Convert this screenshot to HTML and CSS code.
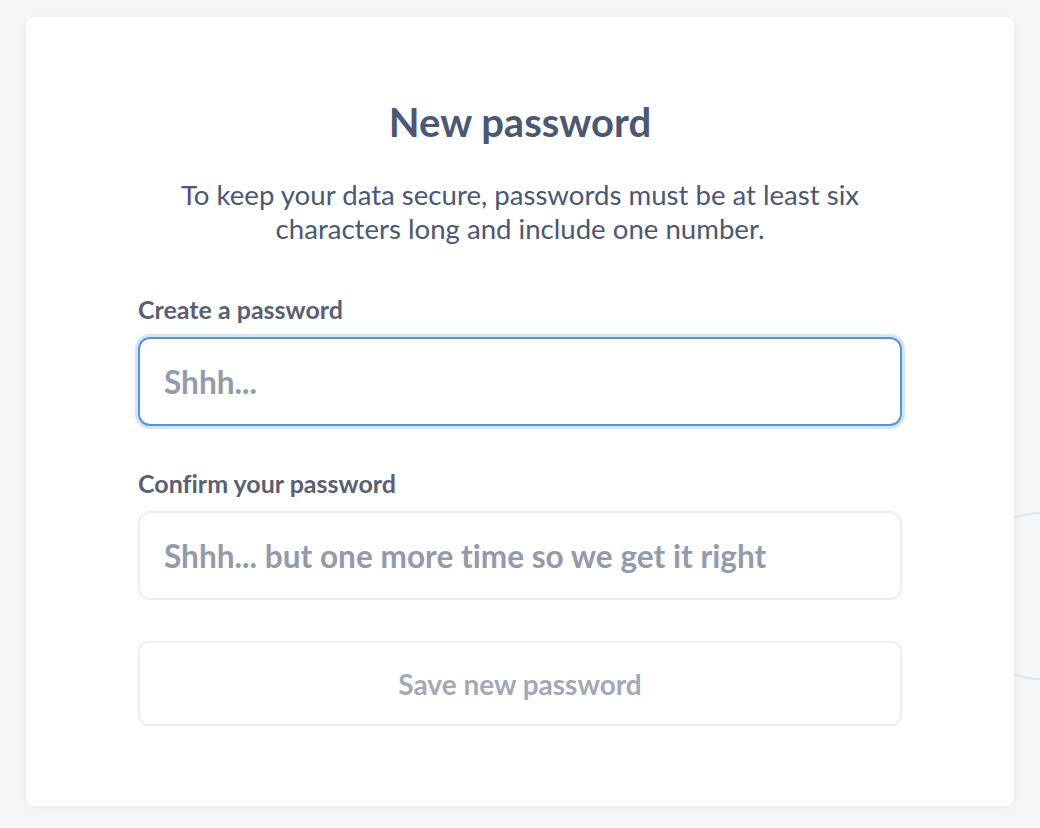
FILE: index.html
```html
<!DOCTYPE html>
<html lang="en">
<head>
<meta charset="utf-8">
<title>New password</title>
<link rel="stylesheet" href="styles.css">
</head>
<body>
<svg class="deco" width="98" height="220" viewBox="0 0 98 220" aria-hidden="true">
  <circle cx="100" cy="110" r="83" fill="none" stroke="#d7e7f6" stroke-width="2"/>
</svg>
<main class="card">
  <h1 class="title">New password</h1>
  <p class="lead">To keep your data secure, passwords must be at least six characters long and include one number.</p>
  <form class="form">
    <label class="field">
      <span class="label">Create a password</span>
      <input class="input input-focus" type="password" placeholder="Shhh...">
    </label>
    <label class="field">
      <span class="label">Confirm your password</span>
      <input class="input" type="password" placeholder="Shhh... but one more time so we get it right">
    </label>
    <button class="btn" type="button">Save new password</button>
  </form>
</main>
</body>
</html>
```
FILE: styles.css
```css
* { box-sizing: border-box; }
html, body { margin: 0; padding: 0; }
body {
  background: #f6f7f9;
  font-family: Lato, "Noto Sans", sans-serif;
  font-variant-ligatures: none;
  min-height: 828px;
  position: relative;
  overflow: hidden;
  padding: 17px 26px 0;
}
.deco {
  position: absolute;
  left: 942px;
  top: 486px;
}
.card {
  position: relative;
  width: 988px;
  background: #fff;
  border-radius: 8px;
  box-shadow: 0 2px 14px rgba(0, 0, 0, 0.06), 0 0 2px rgba(0,0,0,0.04);
  padding: 83px 112px 80px;
  display: flex;
  flex-direction: column;
}
.title {
  margin: 0;
  text-align: center;
  font-size: 40px;
  line-height: 44px;
  font-weight: 700;
  color: #4c5773;
}
.lead {
  margin: 34px 0 0;
  text-align: center;
  font-size: 27.6px;
  line-height: 34px;
  font-weight: 400;
  color: #4c5773;
  padding: 0 30px;
}
.form {
  margin-top: 50px;
  display: flex;
  flex-direction: column;
}
.field {
  display: flex;
  flex-direction: column;
  gap: 15px;
  margin-bottom: 44px;
}
.field:nth-child(2) { margin-bottom: 41px; }
.label {
  font-size: 25px;
  line-height: 26px;
  font-weight: 700;
  color: #5a6072;
}
.input {
  height: 89px;
  width: 100%;
  border: 2px solid #eceef1;
  border-radius: 12px;
  padding: 0 24px;
  font-family: Lato, "Noto Sans", sans-serif;
  font-variant-ligatures: none;
  font-size: 31.6px;
  font-weight: 700;
  color: #4c5773;
  background: #fff;
  outline: none;
}
.input::placeholder { color: #949aab; opacity: 1; }
.input-focus {
  border-color: #5b93d9;
  box-shadow: 0 0 0 3px #d3e5f8;
}
.btn {
  height: 85px;
  width: 100%;
  border: 2px solid #eceef1;
  border-radius: 10px;
  background: #fff;
  font-family: Lato, "Noto Sans", sans-serif;
  font-variant-ligatures: none;
  font-size: 28px;
  font-weight: 700;
  color: #a3a8b6;
}
```
